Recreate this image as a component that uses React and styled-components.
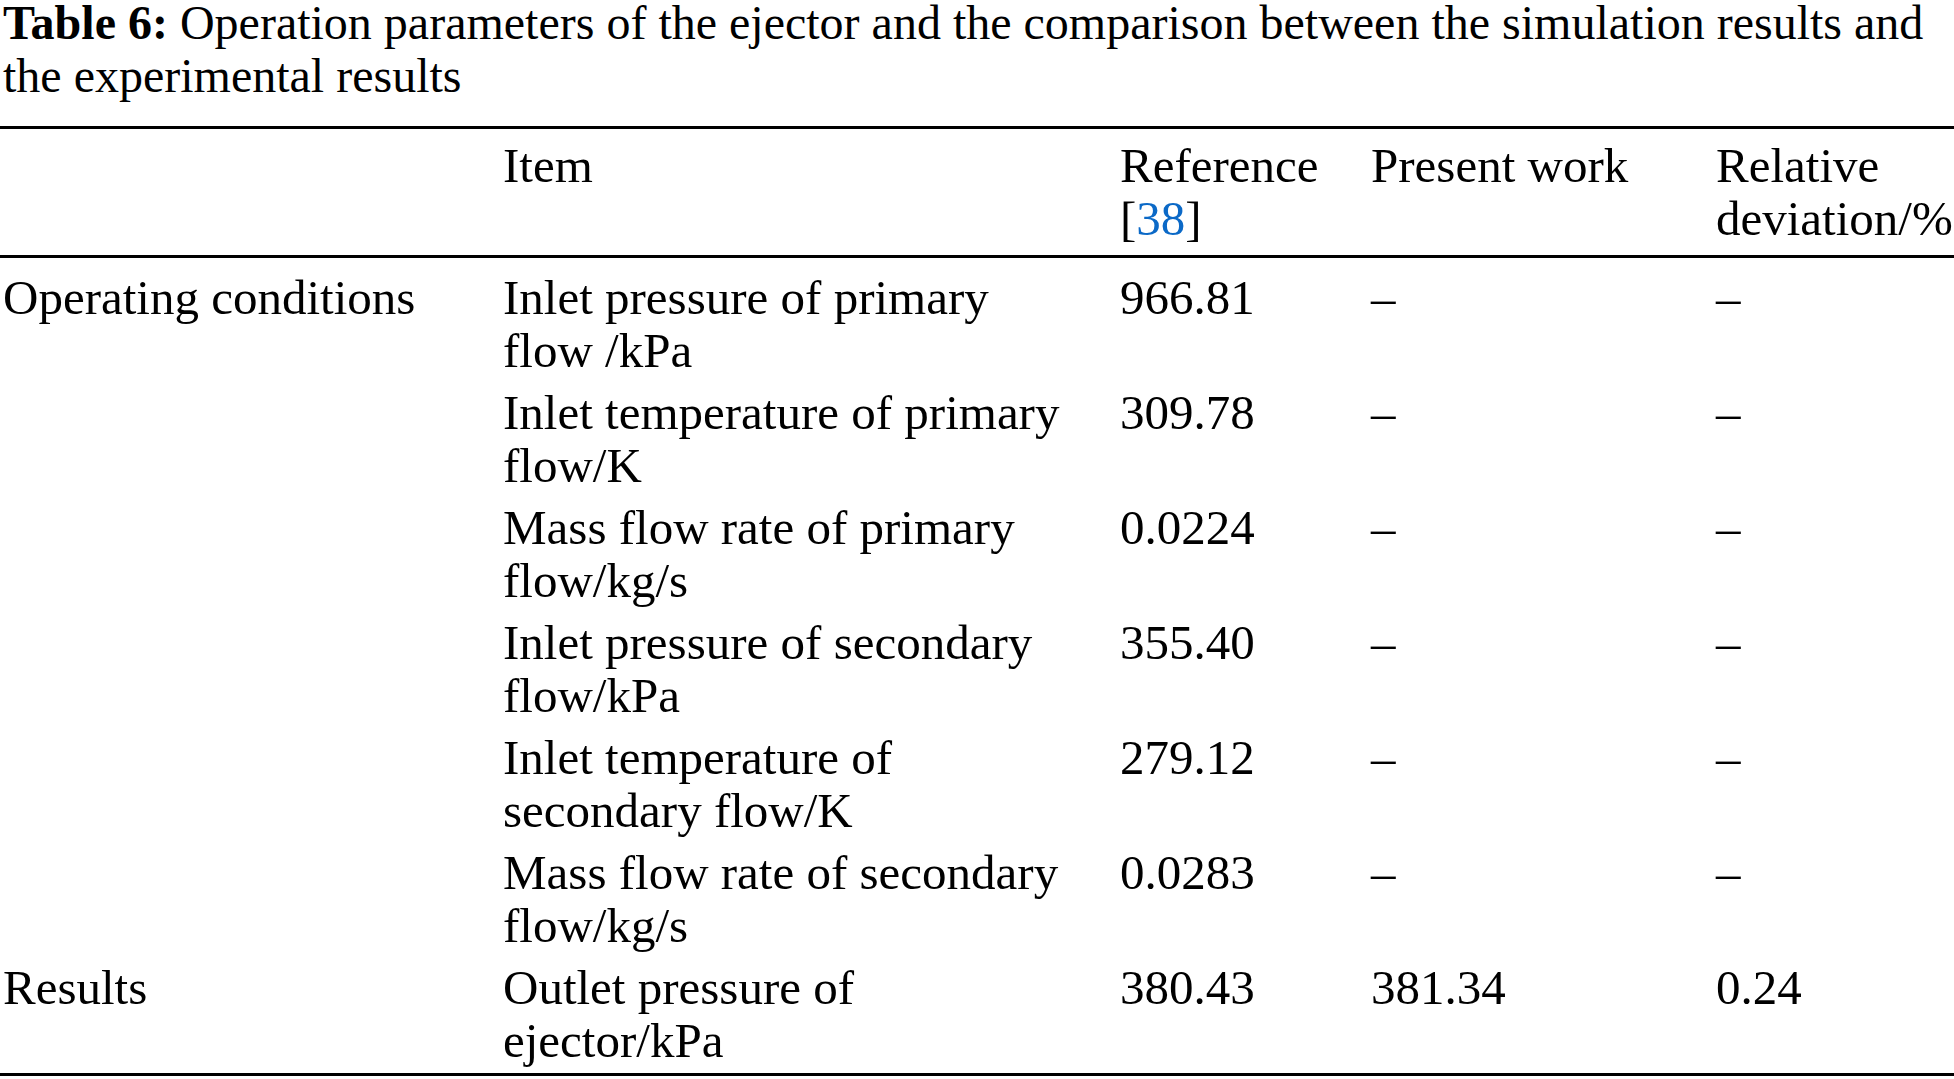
import React from "react";
import styled, { createGlobalStyle } from "styled-components";

const Global = createGlobalStyle`
  html, body { margin: 0; padding: 0; background: #fff; }
  body { font-family: "Liberation Serif", "Times New Roman", serif; color: #000; overflow: hidden; }
`;

const Page = styled.div`
  width: 1954px;
`;

const Caption = styled.p`
  margin: -4px 0 0 0;
  padding: 0 4px 0 3px;
  font-size: 48px;
  line-height: 53px;
`;

const CaptionLabel = styled.b`
  font-weight: 700;
`;

const Table = styled.div`
  margin-top: 24px;
  border-top: 3px solid #000;
  border-bottom: 3px solid #000;
  font-size: 49px;
  line-height: 53px;
`;

const Row = styled.div`
  display: grid;
  grid-template-columns: 500px 617px 251px 345px 241px;
  padding: ${(p) => p.$pad};
  border-bottom: ${(p) => (p.$ruled ? "3px solid #000" : "none")};
`;

const Cell = styled.div`
  padding: 0 ${(p) => (p.$wide ? "44px" : "4px")} 0 3px;
`;

const Link = styled.span`
  color: #0b69c7;
`;

const rows = [
  ["Operating conditions", "Inlet pressure of primary flow /kPa", "966.81", "–", "–"],
  ["", "Inlet temperature of primary flow/K", "309.78", "–", "–"],
  ["", "Mass flow rate of primary flow/kg/s", "0.0224", "–", "–"],
  ["", "Inlet pressure of secondary flow/kPa", "355.40", "–", "–"],
  ["", "Inlet temperature of secondary flow/K", "279.12", "–", "–"],
  ["", "Mass flow rate of secondary flow/kg/s", "0.0283", "–", "–"],
  ["Results", "Outlet pressure of ejector/kPa", "380.43", "381.34", "0.24"],
];

export default function App() {
  return (
    <Page>
      <Global />
      <Caption>
        <CaptionLabel>Table 6:</CaptionLabel> Operation parameters of the ejector and the
        comparison between the simulation results and the experimental results
      </Caption>
      <Table>
        <Row $ruled $pad="10px 0 10px 0">
          <Cell />
          <Cell $wide>Item</Cell>
          <Cell>
            Reference [<Link>38</Link>]
          </Cell>
          <Cell>Present work</Cell>
          <Cell>Relative deviation/%</Cell>
        </Row>
        {rows.map((r, i) => (
          <Row
            key={i}
            $pad={`${i === 0 ? 13 : 5}px 0 ${i === rows.length - 1 ? 6 : 4}px 0`}
          >
            <Cell>{r[0]}</Cell>
            <Cell $wide>{r[1]}</Cell>
            <Cell>{r[2]}</Cell>
            <Cell>{r[3]}</Cell>
            <Cell>{r[4]}</Cell>
          </Row>
        ))}
      </Table>
    </Page>
  );
}
